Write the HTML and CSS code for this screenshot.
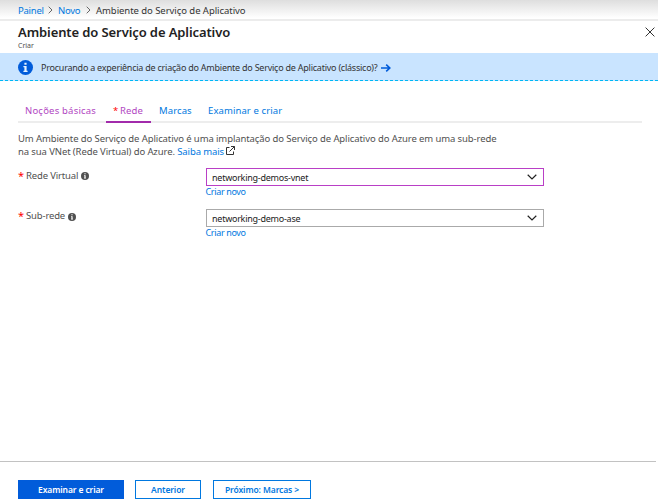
FILE: index.html
```html
<!DOCTYPE html>
<html lang="pt-BR">
<head>
<meta charset="utf-8">
<title>Ambiente do Serviço de Aplicativo</title>
<link rel="stylesheet" href="styles.css">
</head>
<body>
<nav class="breadcrumb">
  <a>Painel</a>
  <svg class="sep" viewBox="0 0 5 8"><path d="M.7.7 4 4 .7 7.3"/></svg>
  <a class="new">Novo</a>
  <svg class="sep" viewBox="0 0 5 8"><path d="M.7.7 4 4 .7 7.3"/></svg>
  <span class="current">Ambiente do Serviço de Aplicativo</span>
</nav>
<header class="header">
  <div>
    <h1>Ambiente do Serviço de Aplicativo</h1>
    <p class="subtitle">Criar</p>
  </div>
  <svg class="close" viewBox="0 0 10 10"><path d="M.6.6 9.4 9.4M9.4.6.6 9.4"/></svg>
</header>
<div class="banner">
  <svg class="banner-icon" viewBox="0 0 15 15"><circle cx="7.5" cy="7.5" r="7.5" fill="#015cda"/><path d="M6.4 2.8h2.2v2H6.4zM5.4 6h3.2v4.7h1V12H5.4v-1.3h1V7.3h-1z" fill="#e5f2ff"/></svg>
  <span>Procurando a experiência de criação do Ambiente do Serviço de Aplicativo (clássico)?</span>
  <svg class="arrow" viewBox="0 0 10 8"><path d="M0 4h8.7M5.2.6 8.8 4 5.2 7.4"/></svg>
</div>
<main class="content">
  <div class="tabs">
    <a class="tab visited">Noções básicas</a>
    <a class="tab active"><span class="star">*</span>Rede</a>
    <a class="tab brands">Marcas</a>
    <a class="tab review">Examinar e criar</a>
  </div>
  <p class="intro"><span class="line">Um Ambiente do Serviço de Aplicativo é uma implantação do Serviço de Aplicativo do Azure em uma sub-rede</span><span class="line">na sua VNet (Rede Virtual) do Azure. <a>Saiba mais</a><svg class="external" viewBox="0 0 9 9"><path d="M3.5 1.5h-3v7h7v-3M5 .5h3.5V4M8.500.5 3.500 5.500"/></svg></span></p>
  <div class="field">
    <label><span class="req">*</span>Rede Virtual<svg class="info" viewBox="0 0 8 8"><circle cx="4" cy="4" r="4" fill="#505050"/><path d="M3.400 1.300h1.200v1H3.400zM3 3.200h1.600v2.500H5v.8H3v-.8h.4V4H3z" fill="#fff"/></svg></label>
    <div class="control">
      <div class="select focused"><span>networking-demos-vnet</span><svg class="chevron" viewBox="0 0 10 6"><path d="M.7.7 5 4.900 9.300.7"/></svg></div>
      <a class="create">Criar novo</a>
    </div>
  </div>
  <div class="field subnet">
    <label><span class="req">*</span>Sub-rede<svg class="info low" viewBox="0 0 8 8"><circle cx="4" cy="4" r="4" fill="#505050"/><path d="M3.400 1.300h1.200v1H3.400zM3 3.200h1.600v2.500H5v.8H3v-.8h.4V4H3z" fill="#fff"/></svg></label>
    <div class="control">
      <div class="select"><span>networking-demo-ase</span><svg class="chevron" viewBox="0 0 10 6"><path d="M.7.7 5 4.900 9.300.7"/></svg></div>
      <a class="create">Criar novo</a>
    </div>
  </div>
</main>
<footer class="footer">
  <button class="primary">Examinar e criar</button>
  <button class="previous">Anterior</button>
  <button class="next">Próximo: Marcas &gt;</button>
</footer>
</body>
</html>
```
FILE: styles.css
```css
* { box-sizing: border-box; }
body {
  margin: 0;
  width: 658px;
  height: 503px;
  overflow: hidden;
  display: flex;
  flex-direction: column;
  background: #fff;
  color: #505050;
  font: 9.5px/13px "Noto Sans", "Open Sans", sans-serif;
  letter-spacing: -.1px;
  white-space: nowrap;
}
h1, p { margin: 0; }
a { color: #0078e0; }
svg { flex: none; fill: none; }
.breadcrumb {
  height: 21px;
  padding: 1px 18px 0;
  display: flex;
  align-items: center;
  background: linear-gradient(#dedede, #fff 18px);
  border-bottom: 2px solid #ececec;
}
.breadcrumb a { width: 25px; letter-spacing: -.25px; }
.breadcrumb .new { width: 23px; }
.breadcrumb .current { color: #333; letter-spacing: -.05px; }
.sep { width: 5px; height: 8px; margin: 0 5px; stroke: #666; }
.header {
  height: 32px;
  padding: 2px 3px 0 18px;
  display: flex;
  justify-content: space-between;
}
h1 { font-size: 13px; line-height: 18px; font-weight: 600; color: #222; }
.subtitle { font-size: 7px; line-height: 9px; letter-spacing: 0; }
.close { width: 10px; height: 10px; margin-top: 4px; stroke: #333; }
.banner {
  height: 28px;
  padding: 2px 18px 0;
  display: flex;
  align-items: center;
  background: #c9e4ff;
  border-bottom: 1px dashed #00b7f5;
  color: #333;
  font-size: 9px;
  letter-spacing: -.235px;
}
.banner-icon { width: 15px; height: 15px; margin-right: 8px; }
.arrow { width: 10px; height: 8px; margin-left: 3px; stroke: #015cda; stroke-width: 1.6; }
.content { flex: 1; padding: 20px 16px 0 18px; }
.tabs { height: 22px; display: flex; border-bottom: 2px solid #ededed; letter-spacing: .1px; }
.tab { height: 22px; padding-top: 3px; }
.visited { width: 88px; padding-left: 7px; color: #b146c2; letter-spacing: .2px; }
.active { width: 45px; padding-left: 7px; color: #b146c2; border-bottom: 2px solid #a22bab; }
.star { color: #f00; display: inline-block; width: 7px; }
.brands { margin-left: 8px; width: 49px; }
.intro { margin-top: 9px; }
.line { display: block; }
.external { width: 9px; height: 9px; margin-left: 2px; stroke: #333; }
.field { display: flex; height: 41px; }
.intro + .field { margin-top: 10px; }
.field label { width: 187.5px; padding-top: 1px; letter-spacing: -.15px; }
.field.subnet label { padding-top: 0; }
.req { color: #f00; display: inline-block; width: 8px; font-size: 11px; line-height: 10px; vertical-align: -1px; }
.info { width: 8px; height: 8px; margin-left: 3px; vertical-align: -1px; }
.low { vertical-align: -2px; }
.control { width: 338px; }
.select {
  height: 18px;
  padding: 0 5.5px;
  display: flex;
  align-items: center;
  justify-content: space-between;
  border: 1px solid #aaa;
  color: #222;
  font-size: 9px;
  letter-spacing: -.25px;
}
.focused { border-color: #b93fc6; }
.chevron { width: 10px; height: 6px; stroke: #222; stroke-width: 1.2; }
.create { display: block; font-size: 9px; line-height: 12px; letter-spacing: -.35px; }
.footer {
  height: 42px;
  margin-right: 2px;
  padding: 18px 18px 0;
  border-top: 1px solid #c2c2c2;
  display: flex;
  align-items: flex-start;
}
button {
  height: 19px;
  padding: 0;
  border: 1px solid #0078e0;
  background: #fff;
  color: #0078e0;
  font: 600 8.5px/17px "Noto Sans", "Open Sans", sans-serif;
  letter-spacing: -.1px;
}
.primary { width: 106px; background: #015cda; border-color: #015cda; color: #fff; }
.previous { width: 66px; margin-left: 11px; }
.next { width: 98px; margin-left: 12px; }
```
